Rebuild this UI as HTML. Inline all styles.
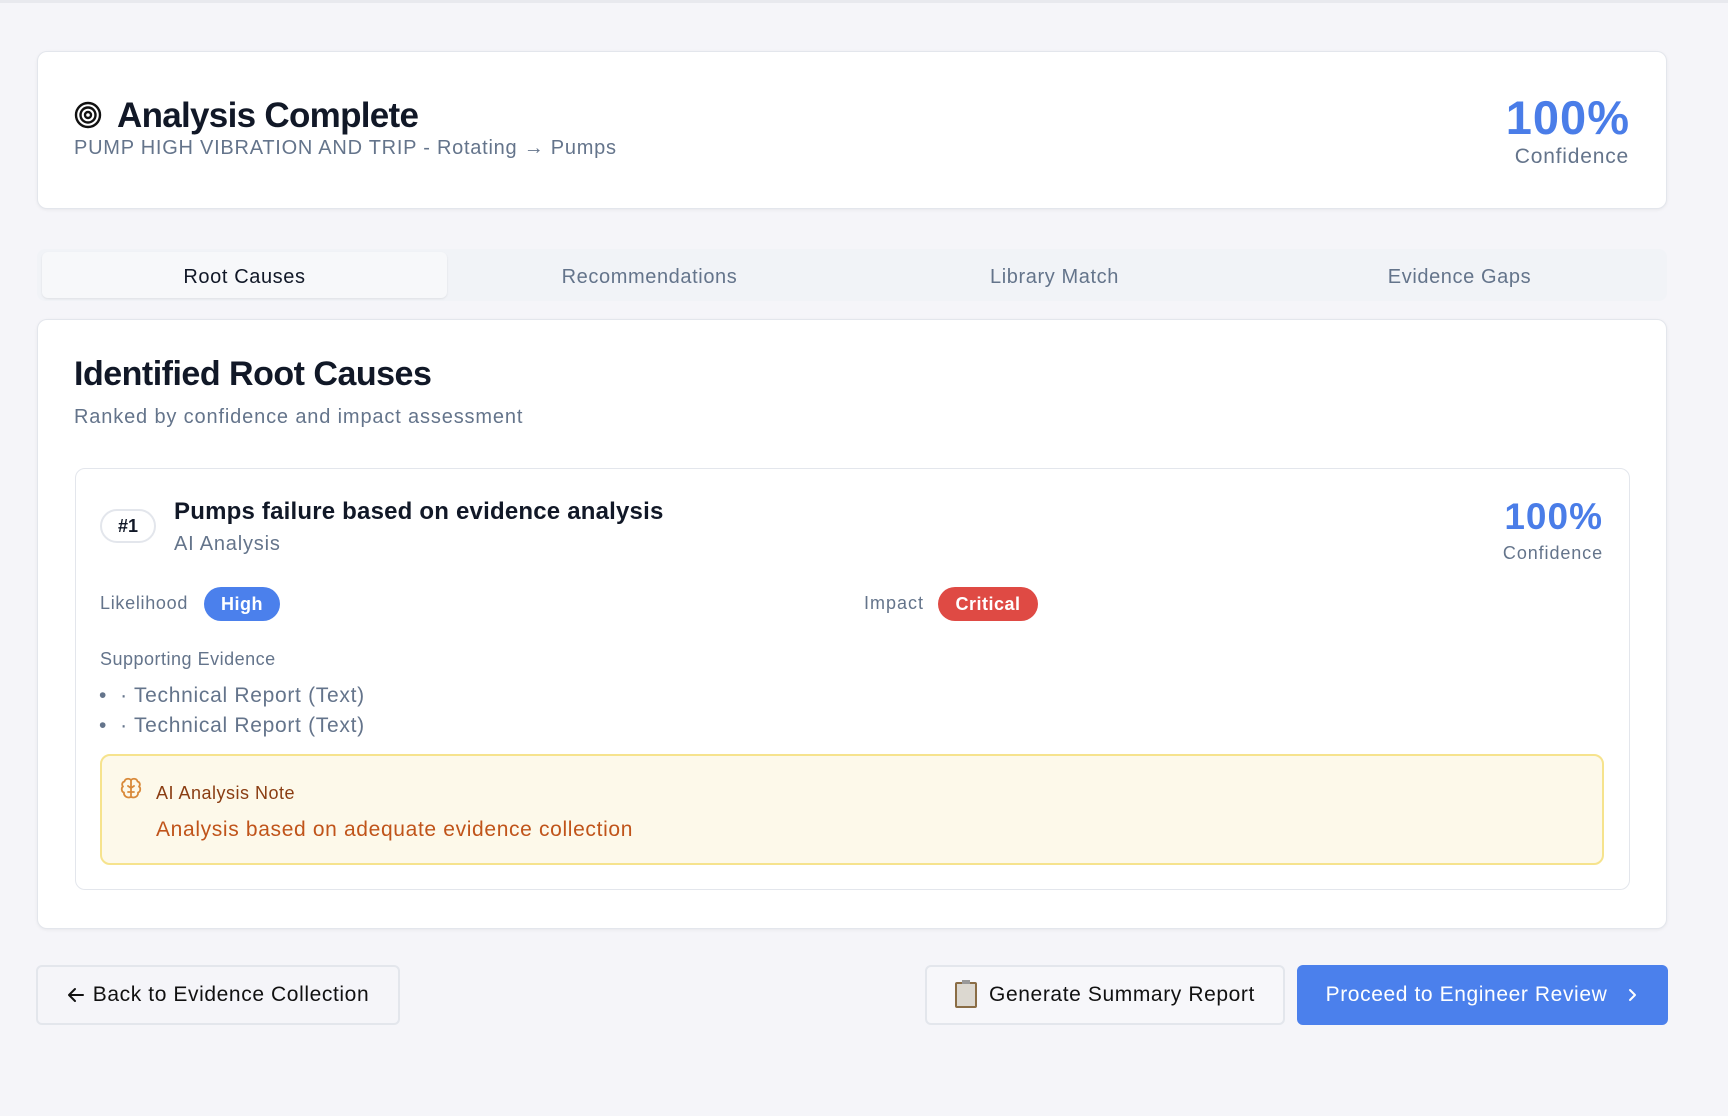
<!DOCTYPE html>
<html><head><meta charset="utf-8"><style>
*{box-sizing:border-box;margin:0;padding:0}
body{width:1728px;height:1116px;background:#f5f5f9;font-family:"Liberation Sans",sans-serif;position:relative;overflow:hidden;color:#111827}
.topline{position:absolute;left:0;top:0;width:1728px;height:3px;background:#e8e9ee}
.card{position:absolute;background:#fff;border:1px solid #e3e6ec;border-radius:10px;box-shadow:0 1px 3px rgba(0,0,0,.06)}
.abs{position:absolute;white-space:nowrap}
.blue{color:#4a7de8;font-weight:bold}
.muted{color:#64748b}
.pill{position:absolute;border-radius:18px;color:#fff;font-weight:bold;font-size:18px;text-align:center;letter-spacing:.5px}
.btn{position:absolute;border-radius:6px;font-size:21px;letter-spacing:.6px;display:flex;align-items:center;justify-content:center}
</style></head><body>
<div class="topline"></div>
<div class="card" style="left:37px;top:51px;width:1630px;height:158px"></div>
<svg class="abs" style="left:74px;top:101px" width="28" height="28" viewBox="0 0 28 28" fill="none" stroke="#111" stroke-width="2.4"><circle cx="14" cy="14" r="12"/><circle cx="14" cy="14" r="7.5"/><circle cx="14" cy="14" r="3"/></svg>
<div class="abs" style="left:117px;top:96px;font-size:35px;font-weight:bold;letter-spacing:-.7px">Analysis Complete</div>
<div class="abs muted" style="left:74px;top:137px;font-size:20px;letter-spacing:.75px">PUMP HIGH VIBRATION AND TRIP - Rotating → Pumps</div>
<div class="abs blue" style="right:98px;top:90px;font-size:47px;letter-spacing:1px">100%</div>
<div class="abs muted" style="right:99px;top:145px;font-size:21px;letter-spacing:.8px">Confidence</div>

<div class="abs" style="left:37px;top:249px;width:1630px;height:52px;background:#f1f3f7;border-radius:8px"></div>
<div class="abs" style="left:42px;top:252px;width:405px;height:46px;background:#f7f8fa;border-radius:6px;box-shadow:0 1px 2px rgba(0,0,0,.08)"></div>
<div class="abs" style="left:42px;top:266px;width:405px;text-align:center;font-size:20px;letter-spacing:.6px">Root Causes</div>
<div class="abs muted" style="left:447px;top:266px;width:405px;text-align:center;font-size:20px;letter-spacing:.6px">Recommendations</div>
<div class="abs muted" style="left:852px;top:266px;width:405px;text-align:center;font-size:20px;letter-spacing:.6px">Library Match</div>
<div class="abs muted" style="left:1257px;top:266px;width:405px;text-align:center;font-size:20px;letter-spacing:.6px">Evidence Gaps</div>

<div class="card" style="left:37px;top:319px;width:1630px;height:610px"></div>
<div class="abs" style="left:74px;top:355px;font-size:34px;font-weight:bold;letter-spacing:-.5px">Identified Root Causes</div>
<div class="abs muted" style="left:74px;top:406px;font-size:20px;letter-spacing:.85px">Ranked by confidence and impact assessment</div>

<div class="card" style="left:75px;top:468px;width:1555px;height:422px;box-shadow:none"></div>
<div class="abs" style="left:100px;top:509px;width:56px;height:34px;border:2px solid #e3e6ec;border-radius:17px;font-size:18px;font-weight:bold;text-align:center;line-height:30px">#1</div>
<div class="abs" style="left:174px;top:498px;font-size:24px;font-weight:bold;letter-spacing:.2px">Pumps failure based on evidence analysis</div>
<div class="abs muted" style="left:174px;top:533px;font-size:20px;letter-spacing:.8px">AI Analysis</div>
<div class="abs blue" style="right:125px;top:496px;font-size:37px;letter-spacing:1px">100%</div>
<div class="abs muted" style="right:125px;top:543px;font-size:18px;letter-spacing:.9px">Confidence</div>

<div class="abs muted" style="left:100px;top:593px;font-size:18px;letter-spacing:.7px">Likelihood</div>
<div class="pill" style="left:204px;top:587px;width:76px;height:34px;line-height:34px;background:#4b80ec">High</div>
<div class="abs muted" style="left:864px;top:593px;font-size:18px;letter-spacing:1px">Impact</div>
<div class="pill" style="left:938px;top:587px;width:100px;height:34px;line-height:34px;background:#df4a44">Critical</div>

<div class="abs muted" style="left:100px;top:649px;font-size:18px;letter-spacing:.5px">Supporting Evidence</div>
<div class="abs muted" style="left:99px;top:681px;font-size:21px;letter-spacing:.7px;line-height:30px">•&nbsp;&nbsp;· Technical Report (Text)<br>•&nbsp;&nbsp;· Technical Report (Text)</div>

<div class="abs" style="left:100px;top:754px;width:1504px;height:111px;background:#fdf9ea;border:2px solid #f6e38d;border-radius:10px"></div>
<svg class="abs" style="left:120px;top:777px" width="22" height="24" viewBox="0 0 22 24" fill="none" stroke="#d98a3a" stroke-width="1.8" stroke-linecap="round" stroke-linejoin="round"><path d="M11 3C9 1 5 1.5 4.5 4.5 2 5 1.5 8 3 9.5 1 11 1.5 15 4 15.5 3.5 19 7 21.5 11 20"/><path d="M11 3C13 1 17 1.5 17.5 4.5 20 5 20.5 8 19 9.5 21 11 20.5 15 18 15.5 18.5 19 15 21.5 11 20"/><path d="M11 3v17M8 9l3 2 3-2M8 15h6"/></svg>
<div class="abs" style="left:156px;top:783px;font-size:18px;color:#8a3d12;letter-spacing:.5px">AI Analysis Note</div>
<div class="abs" style="left:156px;top:818px;font-size:21px;color:#c0541a;letter-spacing:.65px">Analysis based on adequate evidence collection</div>

<div class="btn" style="left:36px;top:965px;width:364px;height:60px;background:#f5f5f9;border:2px solid #e3e6ec;color:#111"><svg width="18" height="16" viewBox="0 0 18 16" fill="none" stroke="#111" stroke-width="2" stroke-linecap="round" stroke-linejoin="round" style="margin-right:8px"><path d="M16 8H2M8 2L2 8l6 6"/></svg>Back to Evidence Collection</div>
<div class="btn" style="left:925px;top:965px;width:360px;height:60px;background:#f7f7fa;border:2px solid #e3e6ec;color:#111"><span style="position:relative;display:inline-block;width:22px;height:26px;background:#dcd8d0;border:2px solid #8a6d45;border-radius:2px;margin-right:12px"><span style="position:absolute;left:5px;top:-4px;width:8px;height:4px;background:#999"></span></span>Generate Summary Report</div>
<div class="btn" style="left:1297px;top:965px;width:371px;height:60px;background:#4b80ec;color:#fff">Proceed to Engineer Review<svg width="12" height="16" viewBox="0 0 12 16" fill="none" stroke="#fff" stroke-width="2" stroke-linecap="round" stroke-linejoin="round" style="margin-left:20px"><path d="M3 3l5 5-5 5"/></svg></div>
</body></html>
